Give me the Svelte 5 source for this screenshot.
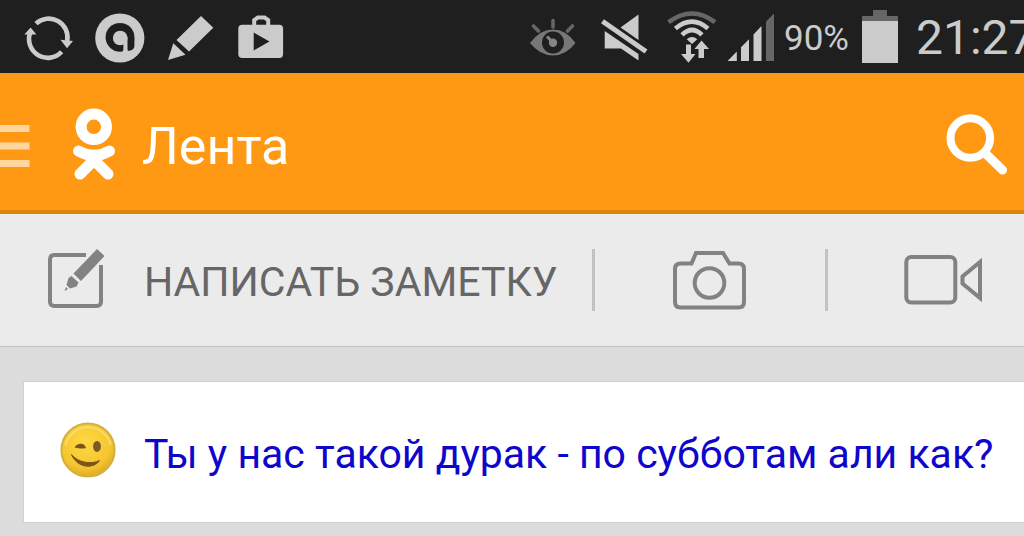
<script>
  const title = 'Лента';
  const post = 'Ты у нас такой дурак - по субботам али как?';
</script>

<div class="screen">
  <div class="status">
    <div class="notices">
      <svg width="48" height="73" viewBox="24 0 48 73" aria-hidden="true">
        <g fill="none" stroke="#cbcbcb" stroke-width="4.6">
          <path d="M36 23.6A18.8 18.8 0 0 1 67.2 41" />
          <path d="M61.6 51.8A18.8 18.8 0 0 1 30 33" />
        </g>
        <path d="M60.5 39.8L73 41 67 48.2zM24.3 34.6L30.6 27.6 36.4 34.6z" fill="#cbcbcb" />
      </svg>
      <svg width="48" height="73" viewBox="96 0 48 73" aria-hidden="true">
        <circle cx="119.8" cy="38" r="24.6" fill="#cbcbcb" />
        <circle cx="120" cy="37.3" r="14.4" fill="#1f1f1f" />
        <path d="M127.5 38H134.4V46Q134.4 50.5 127.5 51z" fill="#1f1f1f" />
        <path d="M123.4 37H127.5V51.5Q125 53 122.4 52 123.8 50 123.4 47z" fill="#cbcbcb" />
        <circle cx="120.2" cy="38" r="7.3" fill="#cbcbcb" />
      </svg>
      <svg width="48" height="73" viewBox="168 0 48 73" aria-hidden="true">
        <path d="M201 16L213.3 27.8 189 51.5 176.5 40zM173.3 43.3L185.5 54.8 168 60z" fill="#cbcbcb" />
      </svg>
      <svg width="48" height="73" viewBox="240 0 48 73" aria-hidden="true">
        <path d="M254.2 26V20L257.8 17.6H264.5L268.2 20V26" fill="none" stroke="#cbcbcb" stroke-width="4" />
        <rect x="238.3" y="24.7" width="44.8" height="33.3" rx="4" fill="#cbcbcb" />
        <path d="M253.7 32.5V50.5L269.5 41.4z" fill="#1f1f1f" />
      </svg>
    </div>
    <div class="system">
      <svg width="60" height="73" viewBox="530 0 60 73" aria-hidden="true">
        <path d="M530 43Q540 29.5 553 29.5T575.5 43Q566 55.5 553 55.5T530 43z" fill="#777" />
        <circle cx="553" cy="42.5" r="11" fill="#1f1f1f" />
        <circle cx="553" cy="42.7" r="4.2" fill="#858585" />
        <path d="M553 42.5L547 36.5" stroke="#858585" stroke-width="3" />
        <path d="M553 20.5V27M533.5 26L538.5 31M572.5 26L567.5 31" stroke="#666" stroke-width="3.6" stroke-linecap="round" />
      </svg>
      <svg width="56" height="73" viewBox="600 0 56 73" aria-hidden="true">
        <path d="M638.5 14.5V40L620.5 27.6zM604.7 31L638.5 54V60.5L621 48.5H604.7z" fill="#cbcbcb" />
        <path d="M602.5 21.3L646 51.5" stroke="#cbcbcb" stroke-width="5" />
      </svg>
      <svg width="52" height="73" viewBox="666 0 52 73" aria-hidden="true">
        <g fill="none" stroke-width="4.6">
          <path d="M668.5 22.2Q692 4.8 715 22.2" stroke="#666" />
          <path d="M675.4 28.5Q692 14.8 708 28.5" stroke="#cbcbcb" />
          <path d="M682 34.8Q692 25.2 702 34.8" stroke="#cbcbcb" />
        </g>
        <path d="M686.7 39.3Q692 34.8 697.3 39.3L692 44z" fill="#cbcbcb" />
        <path d="M686 44.5H691V54H695.5L688.5 62.8 681 54H686zM698.5 58V49H694.5L701.5 40.5 709 49H704V58z" fill="#cbcbcb" />
      </svg>
      <svg width="46" height="73" viewBox="728 0 46 73" aria-hidden="true">
        <path d="M727.5 61L736.8 51.5V61zM741 61V47.2L749 39.2V61zM753.5 61V34.5L761.5 26V61z" fill="#cbcbcb" />
        <path d="M766 61V21.5L774 13.5V61z" fill="#666" />
      </svg>
      <span class="percent">90%</span>
      <svg width="44" height="73" viewBox="862 0 44 73" aria-hidden="true">
        <path d="M862 21V16H873V10H887V16H898V21z" fill="#666" />
        <rect x="862" y="21" width="36" height="42" fill="#cbcbcb" />
      </svg>
      <time>21:27</time>
    </div>
  </div>

  <header>
    <button class="menu" aria-label="Меню">
      <svg width="30" height="44" viewBox="0 0 30 44" aria-hidden="true">
        <path d="M0 4.5H29.5M0 22H29.5M0 39.5H29.5" stroke="#ffd69b" stroke-width="7" />
      </svg>
    </button>
    <svg class="logo" width="44" height="72" viewBox="72 108 44 72" aria-hidden="true">
      <circle cx="93.8" cy="126.8" r="12.7" fill="none" stroke="#fff" stroke-width="11" />
      <g fill="none" stroke="#fff" stroke-width="11" stroke-linecap="round" stroke-linejoin="round">
        <path d="M78.5 151Q94 159.8 109.5 151" />
        <path d="M80 174L94 160 108 174" />
      </g>
    </svg>
    <h1>{title}</h1>
    <button class="search" aria-label="Поиск">
      <svg width="62" height="62" viewBox="946 114 62 62" aria-hidden="true">
        <circle cx="970.3" cy="138" r="19.8" fill="none" stroke="#fff" stroke-width="8" />
        <path d="M985 153L1002.5 170" stroke="#fff" stroke-width="9" stroke-linecap="round" />
      </svg>
    </button>
  </header>

  <nav>
    <button class="write">
      <svg width="56" height="64" viewBox="48 248 56 64" aria-hidden="true">
        <path d="M86 255H54.5Q50 255 50 259.5V301.5Q50 306 54.5 306H96.5Q101 306 101 301.5V265" fill="none" stroke="#828282" stroke-width="4" />
        <path d="M97 249L104.5 256 81 281 73.5 273.5zM71.5 276L78.5 282.5 76.5 286.5 70 288.5 66.5 285 68.5 278zM66 287L68 289 64.5 291z" fill="#828282" />
      </svg>
      <span>НАПИСАТЬ ЗАМЕТКУ</span>
    </button>
    <button class="photo" aria-label="Фото">
      <svg width="74" height="60" viewBox="673 250 74 60" aria-hidden="true">
        <g fill="none" stroke="#828282" stroke-width="4">
          <path d="M675 269Q675 263.5 680.5 263.5H691.5L696 253H723L729.5 263.5H738.5Q744 263.5 744 269V302Q744 307.5 738.5 307.5H680.5Q675 307.5 675 302z" />
          <circle cx="709.5" cy="283" r="14.8" />
        </g>
      </svg>
    </button>
    <button class="video" aria-label="Видео">
      <svg width="78" height="52" viewBox="904 255 78 52" aria-hidden="true">
        <g fill="none" stroke="#828282" stroke-width="4">
          <rect x="906.3" y="258" width="49" height="45.5" rx="5" />
          <path d="M980 263V299L962.5 284.5V277.5z" />
        </g>
      </svg>
    </button>
  </nav>

  <main>
    <article>
      <svg width="56" height="56" viewBox="0 0 56 56" role="img" aria-label="Подмигивание">
        <defs>
          <radialGradient id="face" cx="45%" cy="35%" r="65%">
            <stop offset="0" stop-color="#ffd944" />
            <stop offset="0.75" stop-color="#f4c52e" />
            <stop offset="1" stop-color="#e0ab22" />
          </radialGradient>
        </defs>
        <circle cx="28" cy="28" r="26.6" fill="url(#face)" stroke="#d3b043" stroke-width="2" />
        <path d="M5.5 22A23.5 23.5 0 0 1 50.5 22" fill="none" stroke="#fbdc66" stroke-width="2" stroke-linecap="round" />
        <path d="M14.5 25.5Q17 21.5 21 21.8 25 22 26 26 21 27.4 14.5 25.5z" fill="#7a5518" />
        <ellipse cx="37" cy="24.4" rx="3.9" ry="5.5" fill="#7a5a25" />
        <path d="M11.5 32.5C18 41 32 42.5 39.5 38.5 35 46.5 18 47.5 11.5 32.5z" fill="#7a5518" stroke="#7a5518" stroke-linejoin="round" />
      </svg>
      <a href="#post">{post}</a>
    </article>
  </main>
</div>

<style>
  :global(body) {
    margin: 0;
    background: #dcdcdc;
  }
  .screen {
    font-family: Roboto, sans-serif;
    overflow: hidden;
  }
  svg {
    display: block;
    flex: none;
    overflow: visible;
  }
  button {
    border: 0;
    margin: 0;
    padding: 0;
    background: none;
    font: inherit;
    color: inherit;
  }
  .status {
    display: flex;
    justify-content: space-between;
    background: #1f1f1f;
    color: #cbcbcb;
  }
  .notices {
    display: flex;
    gap: 24px;
    padding-left: 24px;
  }
  .system {
    display: flex;
    align-items: center;
    gap: 10px;
  }
  .percent {
    width: 68px;
    font-size: 35px;
    line-height: 40px;
    padding-top: 4px;
    white-space: nowrap;
  }
  time {
    width: 108px;
    overflow: hidden;
    font-size: 48px;
    line-height: 56px;
    padding-top: 2px;
  }
  header {
    display: flex;
    align-items: center;
    height: 132px;
    padding-top: 5px;
    background: #ff9812;
    border-bottom: 4px solid #db840f;
    color: #fff;
  }
  .menu {
    margin-right: 42px;
    padding-top: 4px;
  }
  .logo {
    margin-right: 26px;
  }
  h1 {
    flex: 1;
    margin: 0;
    font-size: 52px;
    line-height: 64px;
    font-weight: 400;
    padding-top: 6px;
  }
  .search {
    margin-right: 16px;
    padding-top: 2px;
  }
  nav {
    display: flex;
    height: 132px;
    background: #ebebeb;
    border-bottom: 1px solid #c4c4c4;
    color: #666;
  }
  nav button {
    display: flex;
    align-items: center;
    justify-content: center;
  }
  .write {
    flex: 1;
    justify-content: flex-start;
    gap: 40px;
    padding-left: 48px;
    font-size: 41px;
    line-height: 48px;
    white-space: nowrap;
  }
  .write span {
    padding-top: 4px;
  }
  .photo {
    width: 233px;
    padding-left: 2px;
    box-sizing: border-box;
  }
  .video {
    width: 199px;
    padding-left: 37px;
    box-sizing: border-box;
  }
  .photo,
  .video {
    background: linear-gradient(#c2c2c2, #c2c2c2) left center / 3px 62px no-repeat;
  }
  main {
    padding: 34px 0 13px 23px;
  }
  article {
    display: flex;
    align-items: center;
    gap: 28px;
    height: 142px;
    padding: 0 0 4px 36px;
    background: #fff;
    border: 1px solid #d2d2d2;
    border-right: 0;
    box-sizing: border-box;
  }
  a {
    color: #0f06cc;
    font-size: 41px;
    line-height: 56px;
    padding-top: 8px;
    text-decoration: none;
    white-space: nowrap;
  }
</style>
